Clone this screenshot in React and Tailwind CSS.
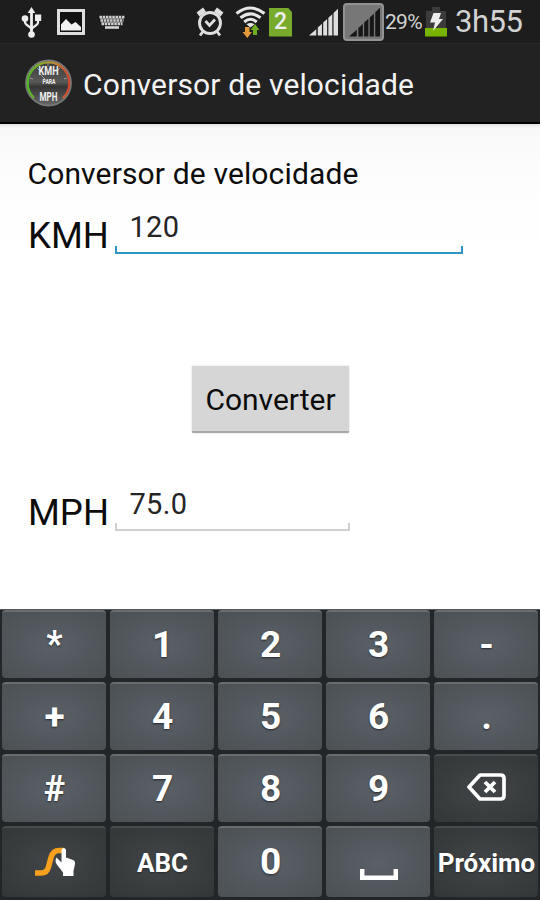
import React, { useState } from 'react';
import clsx from 'clsx';

const UsbIcon = () => (
  <svg className="ml-[21px] h-[36px] w-[21px]" viewBox="0 0 21 36" fill="none" stroke="#eeeeee" strokeWidth="2.200">
    <path d="M10.500 7v24" strokeWidth="2.800" />
    <path d="M4 14v4c0 4 6.500 4 6.500 8M17 14v4.500c0 3.500-6.500 4-6.500 7.500" />
    <path d="M10.500 3l3.800 6H6.700z" fill="#eeeeee" stroke="none" />
    <circle cx="4" cy="14.500" r="3.300" fill="#eeeeee" stroke="none" />
    <rect x="14" y="10.500" width="6.200" height="6.500" fill="#eeeeee" stroke="none" />
    <circle cx="10.500" cy="30.500" r="3.300" fill="#eeeeee" stroke="none" />
  </svg>
);

const PictureIcon = () => (
  <svg className="ml-[15px] h-[26px] w-[28px]" viewBox="0 0 28 26">
    <rect x="1.500" y="1.500" width="25" height="23" fill="#111111" stroke="#dedede" strokeWidth="3" />
    <path d="M4 21.500v-6l5-5.500 4.500 4.500 1 1 4-2.500 5.500 5v3.500z" fill="#f2f2f2" />
  </svg>
);

const KeyboardIcon = () => (
  <svg className="ml-[14px] h-[16px] w-[26px]" viewBox="0 0 26 16" stroke="#d0d0d0" fill="none">
    <path d="M.5 3h25M1.500 6.500h23M2.500 10h21" strokeWidth="2.700" strokeDasharray="2.500 .7" />
    <path d="M6 13.500h14" strokeWidth="2.700" />
    <path d="M1 4.700h24M2 8.300h22" strokeWidth=".7" />
  </svg>
);

const AlarmIcon = () => (
  <svg className="h-[30px] w-[28px]" viewBox="0 0 28 30" fill="none" stroke="#dfdfdf">
    <circle cx="14" cy="16" r="10.500" strokeWidth="2.900" />
    <path d="M2 7.500l6.500-5M26 7.500l-6.500-5" strokeWidth="4.800" />
    <path d="M7 24.500l-3 4M21 24.500l3 4" strokeWidth="2.800" />
    <path d="M9.500 14l4 4.500 5.500-6" strokeWidth="2.700" />
  </svg>
);

const WifiIcon = () => (
  <svg className="h-[32px] w-[31px]" viewBox="0 0 31 32">
    <g fill="none" stroke="#e6e6e6" strokeWidth="3.100">
      <path d="M1.500 7.500q14-11 28 0" />
      <path d="M5.500 11.800q10-8 20 0" />
      <path d="M9.300 16q6.200-5.500 12.400 0" />
    </g>
    <path d="M11.500 18.300q4-2.500 8 0l-4 3.200z" fill="#e6e6e6" />
    <path d="M10 21h4.500v5H17l-4.700 6L7.500 26H10z" fill="#e49a3a" />
    <path d="M18 29h4v-5h2.500L20 18l-4.500 6H18z" fill="#6fae20" />
  </svg>
);

const SignalIcon = ({ className, color }) => (
  <svg className={className} viewBox="0 0 28 28" fill={color} preserveAspectRatio="none">
    <path d="M0 27.500l7-6.200v6.200zM8.500 27.500v-8l4-3.700v11.700zM13.700 27.500V14.500l3.800-3.500v16.500zM18.700 27.500V9.800l3.800-3.500v21.200zM23.700 27.500V5L28 .8v26.700z" />
  </svg>
);

const BatteryIcon = () => (
  <svg className="ml-[3px] h-[30px] w-[22px]" viewBox="0 0 22 30">
    <path d="M7 0h8v4h6v17H1V4h6z" fill="#3b3b3b" />
    <rect y="21" width="22" height="8.500" fill="#78b400" />
    <path d="M8.500 6h7.500l-2 6h4L8 24l2-8.500H5z" fill="#ededed" />
  </svg>
);

const GaugeLogo = () => (
  <svg className="ml-[24px] mt-px h-[50px] w-[50px]" viewBox="0 0 50 50">
    <defs>
      <linearGradient id="dial" x1="0" y1="0" x2="0" y2="1">
        <stop offset="0" stopColor="#3b3b39" />
        <stop offset=".48" stopColor="#585856" />
        <stop offset=".58" stopColor="#353535" />
        <stop offset="1" stopColor="#676767" />
      </linearGradient>
      <linearGradient id="arc" gradientUnits="userSpaceOnUse" x1="4" y1="0" x2="45" y2="0">
        <stop offset="0" stopColor="#50b827" />
        <stop offset=".35" stopColor="#8fa728" />
        <stop offset=".65" stopColor="#c28b35" />
        <stop offset="1" stopColor="#d04532" />
      </linearGradient>
    </defs>
    <circle cx="24.500" cy="24" r="22.500" fill="url(#dial)" stroke="#777977" strokeWidth="1.800" />
    <path d="M10 39A20.800 20.800 0 1 1 39 39" fill="none" stroke="url(#arc)" strokeWidth="2.200" />
    <path d="M6 19l3 1M13 9l2 2M36 9l-2 2M43 19l-3 1M24 4v3M15 14l6 6" stroke="#aaaaaa" strokeWidth=".8" />
    <g fill="#f0f0f0" fontFamily="Roboto, sans-serif" fontWeight="700" textAnchor="middle">
      <text x="24.500" y="16" fontSize="12.500" textLength="20" lengthAdjust="spacingAndGlyphs">KMH</text>
      <text x="25" y="25" fontSize="7" textLength="13" lengthAdjust="spacingAndGlyphs">PARA</text>
      <text x="24.500" y="41.500" fontSize="13" textLength="18" lengthAdjust="spacingAndGlyphs">MPH</text>
    </g>
  </svg>
);

const SwypeIcon = () => (
  <svg className="mt-[1px] h-[30px] w-[42px]" viewBox="0 0 42 30">
    <path d="M1 26h6q6 0 7.500-6l2.500-9.500q2-7 8-7h5" fill="none" stroke="#f6a01d" strokeWidth="5.500" />
    <path d="M27.500 3.500c0-3.500 4.500-3.500 4.500 0v7l7 2.500c2 .8 2.300 3 1.800 5L39.500 24v5H29v-3.500l-6.500-8.500c-1.500-2-1-5 0-6.500l5 5z" fill="white" />
  </svg>
);

const BackspaceIcon = () => (
  <svg className="mb-[2px] h-[28px] w-[39px]" viewBox="0 0 39 28" fill="none" stroke="white">
    <path d="M13 2h20.500q3.500 0 3.500 3.500v17q0 3.500-3.500 3.500H13L2 14z" strokeWidth="3.700" strokeLinejoin="round" />
    <path d="M18 9l10 10M28 9l-10 10" strokeWidth="3.800" />
  </svg>
);

const SpaceIcon = () => (
  <svg className="mt-[24px] h-[12px] w-[38px]" viewBox="0 0 38 12" fill="none" stroke="white" strokeWidth="4.500">
    <path d="M2.200 1v8.700h33.600V1" />
  </svg>
);

const keys = [
  { id: '*', size: 'text-[36px] pb-[2px]' }, { id: '1' }, { id: '2' }, { id: '3' }, { id: '-' },
  { id: '+' }, { id: '4' }, { id: '5' }, { id: '6' }, { id: '.' },
  { id: '#', size: 'text-[36px]' }, { id: '7' }, { id: '8' }, { id: '9' }, { id: 'del', icon: <BackspaceIcon />, dark: true },
  { id: 'swype', icon: <SwypeIcon />, dark: true },
  { id: 'ABC', size: 'text-[26px]', dark: true },
  { id: '0' },
  { id: 'space', icon: <SpaceIcon /> },
  { id: 'Próximo', size: 'text-[26px]', dark: true },
];

const Key = ({ item, onPress }) => (
  <button
    onClick={() => onPress(item.id)}
    className={clsx(
      'flex items-center justify-center rounded-[4px] border-t-2 pl-px font-bold leading-none text-white [text-shadow:0_1px_2px_#25292c]',
      item.size || 'pb-[2px] text-[37px]',
      item.dark
        ? 'border-[#474c4e] bg-[radial-gradient(ellipse_at_center,#414547_0%,#343738_100%)]'
        : 'border-[#686d70] bg-[radial-gradient(ellipse_at_center,#5a6067_0%,#4b5054_100%)]'
    )}
  >
    {item.icon || item.id}
  </button>
);

const Field = ({ label, value, onChange, active }) => (
  <div className="flex h-[54px] pl-[28px]">
    <label className="w-[87px] pt-[14px] text-[36.5px] leading-[44px]">{label}</label>
    <div className={clsx('flex flex-col', active ? 'w-[348px]' : 'w-[235px]')}>
      <input
        value={value}
        onChange={onChange}
        className="h-[46px] w-full bg-transparent pl-[14.500px] pt-[7px] text-[29px] tracking-[0.3px] text-[#252525] outline-none"
      />
      <div
        className={clsx(
          'h-[8px] border-x-2 border-b-2 [clip-path:polygon(0_0,2px_0,2px_4px,calc(100%-2px)_4px,calc(100%-2px)_0,100%_0,100%_100%,0_100%)]',
          active ? 'border-[#2f96c4]' : 'border-[#d0d0d0]'
        )}
      />
    </div>
  </div>
);

const App = () => {
  const [kmh, setKmh] = useState('120');
  const [mph, setMph] = useState('75.0');

  const handleConvert = () => {
    const result = Number(kmh) / 1.6;
    if (!Number.isNaN(result)) setMph(result.toFixed(1));
  };

  const handleKey = (key) => {
    if (key === 'del') setKmh((prev) => prev.slice(0, -1));
    else if (/^[0-9.]$/.test(key)) setKmh((prev) => prev + key);
  };

  return (
    <div className="flex h-[900px] w-[540px] flex-col overflow-hidden bg-white font-[Roboto,sans-serif] text-[#0c0c0c]">
      {/* Status bar */}
      <div className="flex h-[43px] shrink-0 items-center bg-[#1d1d1d] pt-px text-[#d2d2d2]">
        <UsbIcon />
        <PictureIcon />
        <KeyboardIcon />
        <div className="ml-[71px] flex items-center">
          <AlarmIcon />
          <div className="ml-[11px] flex"><WifiIcon /></div>
          <div className="ml-[3px] flex h-[29px] w-[23px] items-center justify-center bg-[#78ab2b] text-[23px] font-medium text-[#eeeeee] [clip-path:polygon(0_0,82%_0,100%_16%,100%_100%,0_100%)]">
            2
          </div>
          <SignalIcon className="ml-[17px] h-[28px] w-[29px]" color="#dddddd" />
          <div className="ml-[5px] flex h-[38px] w-[41px] items-center justify-end rounded-[4px] border-2 border-[#929292] bg-[#777777] pr-[2px]">
            <SignalIcon className="h-[30px] w-[31px]" color="#171717" />
          </div>
        </div>
        <span className="ml-px w-[37px] pt-[2px] text-[21px] tracking-[-0.7px]">29%</span>
        <BatteryIcon />
        <span className="ml-[8px] pt-px text-[31px] tracking-[-0.5px]">3h55</span>
      </div>

      {/* Action bar */}
      <header className="flex h-[81px] shrink-0 items-center border-b-2 border-t border-b-black border-t-[#292929] bg-[#222222]">
        <GaugeLogo />
        <h1 className="ml-[9px] mt-[2px] whitespace-nowrap text-[30px] tracking-[0.14px] text-[#f3f3f3]">Conversor de velocidade</h1>
      </header>

      <main className="flex h-[485px] shrink-0 flex-col bg-[linear-gradient(#e0e0e0_0px,#f8f8f8_4px,#fdfdfd_60px,#fff_130px)] pt-[30px]">
        <p className="h-[46px] whitespace-nowrap pl-[27.500px] text-[30px] leading-[40px] tracking-[0.14px]">Conversor de velocidade</p>
        <Field label="KMH" value={kmh} onChange={(e) => setKmh(e.target.value)} active />
        <button
          onClick={handleConvert}
          className="ml-[192px] mt-[112px] h-[67px] w-[157px] rounded-[1px] border-b-2 border-[#a9a9a9] bg-[#d6d6d6] pt-[2px] text-[30px] shadow-[0_0_2px_#ccc]"
        >
          Converter
        </button>
        <div className="mt-[44px]">
          <Field label="MPH" value={mph} onChange={(e) => setMph(e.target.value)} />
        </div>
      </main>

      {/* Keyboard */}
      <div className="grid flex-1 grid-cols-5 grid-rows-[68px_68px_68px_71px] gap-1 border-t border-[#55585a] bg-[#232628] px-[2px]">
        {keys.map((item) => (
          <Key key={item.id} item={item} onPress={handleKey} />
        ))}
      </div>
    </div>
  );
};

export default App;
